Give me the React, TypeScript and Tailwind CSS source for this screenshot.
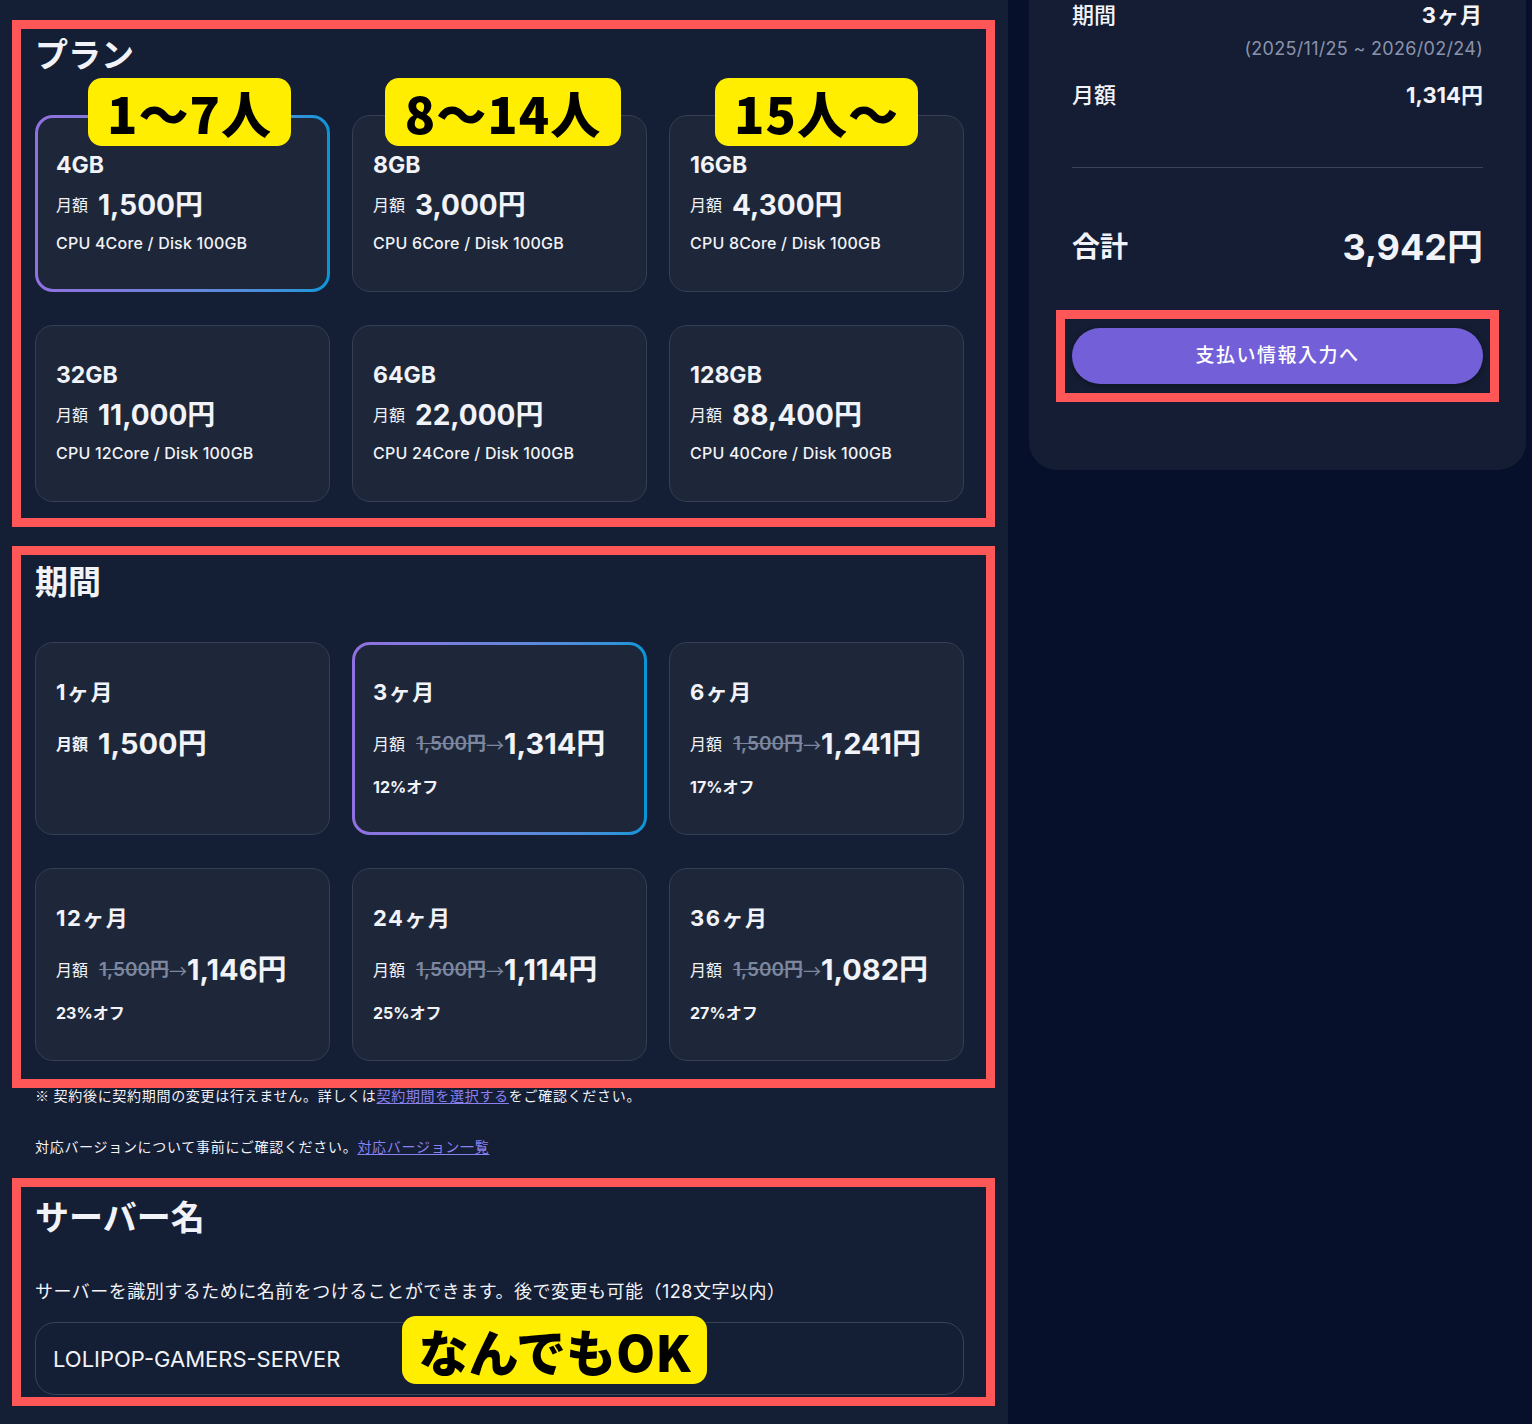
import React from "react";

type Plan = {
  ram: string;
  price: string;
  spec: string;
  selected?: boolean;
  badge?: { label: string; cls: string };
};

type Period = {
  label: string;
  price: string;
  off?: string;
  selected?: boolean;
};

const plans: Plan[] = [
  { ram: "4GB", price: "1,500", spec: "CPU 4Core / Disk 100GB", selected: true, badge: { label: "1〜7人", cls: "left-[53px] w-[203px]" } },
  { ram: "8GB", price: "3,000", spec: "CPU 6Core / Disk 100GB", badge: { label: "8〜14人", cls: "left-[33px] w-[236px]" } },
  { ram: "16GB", price: "4,300", spec: "CPU 8Core / Disk 100GB", badge: { label: "15人〜", cls: "left-[46px] w-[203px]" } },
  { ram: "32GB", price: "11,000", spec: "CPU 12Core / Disk 100GB" },
  { ram: "64GB", price: "22,000", spec: "CPU 24Core / Disk 100GB" },
  { ram: "128GB", price: "88,400", spec: "CPU 40Core / Disk 100GB" },
];

const periods: Period[] = [
  { label: "1ヶ月", price: "1,500" },
  { label: "3ヶ月", price: "1,314", off: "12%オフ", selected: true },
  { label: "6ヶ月", price: "1,241", off: "17%オフ" },
  { label: "12ヶ月", price: "1,146", off: "23%オフ" },
  { label: "24ヶ月", price: "1,114", off: "25%オフ" },
  { label: "36ヶ月", price: "1,082", off: "27%オフ" },
];

const badgeFont = "font-[family-name:'Noto_Sans_CJK_JP',sans-serif] font-black";
const jpFont = "font-[family-name:'Noto_Sans_CJK_JP',sans-serif]";

function YellowBadge({ label, cls }: { label: string; cls: string }) {
  return (
    <div
      className={`absolute -top-[37px] h-[68px] ${cls} flex items-center justify-center rounded-[14px] bg-[#ffee00] text-black text-[50px] leading-none tracking-[1px] ${badgeFont}`}
    >
      {label}
    </div>
  );
}

function PlanCard({ plan }: { plan: Plan }) {
  const body = (
    <>
      <div className="text-[23px] leading-[28px] font-bold">{plan.ram}</div>
      <div className="mt-[8px] flex h-[36px] items-center">
        <span className="text-[16px]">月額</span>
        <span className="ml-[10px] text-[28px] font-bold">{plan.price}円</span>
      </div>
      <div className="mt-[8px] text-[16px] leading-[24px] font-medium tracking-[0.2px]">{plan.spec}</div>
    </>
  );

  return (
    <div className="relative">
      {plan.selected ? (
        <div className="h-[177px] rounded-[18px] bg-linear-to-r from-[#9170e0] to-[#0496d8] p-[3px]">
          <div className="h-full rounded-[15px] bg-[#1e2739] pl-[18px] pt-[33px]">{body}</div>
        </div>
      ) : (
        <div className="h-[177px] rounded-[18px] border border-[#353e54] bg-[#1e2739] pl-[20px] pt-[35px]">{body}</div>
      )}
      {plan.badge && <YellowBadge label={plan.badge.label} cls={plan.badge.cls} />}
    </div>
  );
}

function PeriodCard({ period }: { period: Period }) {
  const body = (
    <>
      <div className="text-[22px] leading-[28px] font-bold tracking-[1.5px]">{period.label}</div>
      <div className="mt-[20px] flex h-[36px] items-center">
        <span className={`text-[16px] ${period.off ? "" : "font-bold"}`}>月額</span>
        {period.off ? (
          <span className="ml-[11px] flex items-center">
            <span className="text-[19px] font-semibold text-[#7d869f] line-through">1,500円</span>
            <span className={`text-[18px] text-[#7d869f] ${jpFont}`}>→</span>
            <span className="text-[29px] font-bold">{period.price}円</span>
          </span>
        ) : (
          <span className="ml-[10px] text-[29px] font-bold">{period.price}円</span>
        )}
      </div>
      {period.off && <div className="mt-[13px] text-[16px] leading-[24px] font-bold">{period.off}</div>}
    </>
  );

  return period.selected ? (
    <div className="h-[193px] rounded-[18px] bg-linear-to-r from-[#9170e0] to-[#0496d8] p-[3px]">
      <div className="h-full rounded-[15px] bg-[#1e2739] pl-[18px] pt-[33px]">{body}</div>
    </div>
  ) : (
    <div className="h-[193px] rounded-[18px] border border-[#353e54] bg-[#1e2739] pl-[20px] pt-[35px]">{body}</div>
  );
}

function Summary() {
  return (
    <div className="ml-[21px] w-[497px] rounded-b-[28px] bg-[#141d33] px-[43px] pb-[68px]">
      <div className="flex items-center justify-between text-[22px] leading-[30px]">
        <span className="font-medium">期間</span>
        <span className="font-bold tracking-[1px]">3ヶ月</span>
      </div>
      <div className="mt-[6px] text-right text-[18px] leading-[26px] tracking-[0.3px] text-[#8a93ab]">(2025/11/25 ~ 2026/02/24)</div>
      <div className="mt-[18px] flex items-center justify-between text-[22px] leading-[30px]">
        <span className="font-medium">月額</span>
        <span className="font-bold">1,314円</span>
      </div>
      <div className="mt-[57px] h-px bg-[#394257]" />
      <div className="mt-[57px] flex items-center justify-between leading-[44px]">
        <span className="text-[28px] font-bold">合計</span>
        <span className="text-[36px] font-bold">3,942円</span>
      </div>
      <div className="-mx-[16px] mt-[41px] border-[9px] border-[#ff5757] px-[7px] py-[9px]">
        <button className="h-[56px] w-full rounded-full bg-[#735fd8] text-[19px] font-medium tracking-[1.5px] text-white shadow-[0_2px_6px_rgba(0,0,0,0.35)]">
          支払い情報入力へ
        </button>
      </div>
    </div>
  );
}

export default function App() {
  return (
    <div className="flex min-h-[1424px] bg-[#06102a] text-[#f1f3f8] font-[family-name:Inter,'Noto_Sans_CJK_JP',sans-serif]">
      <main className="w-[1008px] shrink-0 bg-[#141e34] pl-[12px] pr-[13px] pt-[20px] pb-[18px]">
        <section className="border-[9px] border-[#ff5757] pl-[14px] pr-[22px] pt-[6px] pb-[16px]">
          <h2 className="text-[33px] leading-[40px] font-bold">プラン</h2>
          <div className="mt-[40px] grid grid-cols-3 gap-x-[22px] gap-y-[33px]">
            {plans.map((p) => (
              <PlanCard key={p.ram} plan={p} />
            ))}
          </div>
        </section>

        <section className="mt-[19px] border-[9px] border-[#ff5757] pl-[14px] pr-[22px] pt-[7px] pb-[18px]">
          <h2 className="text-[33px] leading-[40px] font-bold">期間</h2>
          <div className="mt-[40px] grid grid-cols-3 gap-x-[22px] gap-y-[33px]">
            {periods.map((p) => (
              <PeriodCard key={p.label} period={p} />
            ))}
          </div>
        </section>

        <p className={`-mt-[3px] pl-[23px] text-[14px] leading-[20px] tracking-[0.7px] ${jpFont}`}>
          ※ 契約後に契約期間の変更は行えません。詳しくは
          <a href="#" className="text-[#8b80f0] underline underline-offset-2">契約期間を選択する</a>
          をご確認ください。
        </p>
        <p className={`mt-[31px] pl-[23px] text-[14px] leading-[20px] tracking-[0.7px] ${jpFont}`}>
          対応バージョンについて事前にご確認ください。
          <a href="#" className="text-[#8b80f0] underline underline-offset-2">対応バージョン一覧</a>
        </p>

        <section className="mt-[22px] border-[9px] border-[#ff5757] pl-[14px] pr-[22px] pt-[9px] pb-[2px]">
          <h2 className="text-[34px] leading-[44px] font-bold">サーバー名</h2>
          <p className="mt-[38px] text-[18px] leading-[28px] tracking-[0.5px]">
            サーバーを識別するために名前をつけることができます。後で変更も可能（128文字以内）
          </p>
          <div className="relative mt-[16px]">
            <input
              readOnly
              defaultValue="LOLIPOP-GAMERS-SERVER"
              className="h-[73px] w-full rounded-[20px] border border-[#394257] bg-[#141e34] px-[17px] text-[22px] text-[#f1f3f8] outline-none"
            />
            <div
              className={`absolute -top-[6px] left-[367px] flex h-[68px] w-[305px] items-center justify-center rounded-[14px] bg-[#ffee00] text-[50px] leading-none text-black ${badgeFont}`}
            >
              なんでもOK
            </div>
          </div>
        </section>
      </main>

      <aside className="flex-1">
        <Summary />
      </aside>
    </div>
  );
}
